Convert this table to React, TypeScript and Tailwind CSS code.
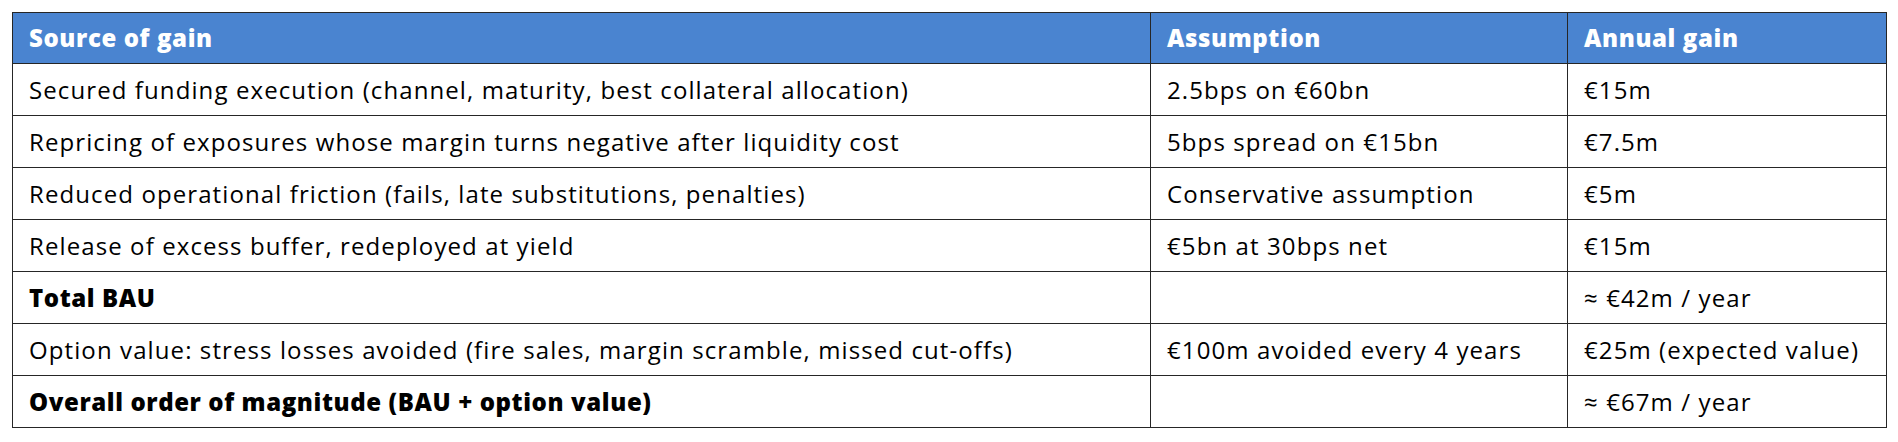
import React from 'react'

type Row = {
  source: string
  assumption: string
  gain: string
  bold?: boolean
}

const rows: Row[] = [
  {
    source: 'Secured funding execution (channel, maturity, best collateral allocation)',
    assumption: '2.5bps on €60bn',
    gain: '€15m',
  },
  {
    source: 'Repricing of exposures whose margin turns negative after liquidity cost',
    assumption: '5bps spread on €15bn',
    gain: '€7.5m',
  },
  {
    source: 'Reduced operational friction (fails, late substitutions, penalties)',
    assumption: 'Conservative assumption',
    gain: '€5m',
  },
  {
    source: 'Release of excess buffer, redeployed at yield',
    assumption: '€5bn at 30bps net',
    gain: '€15m',
  },
  { source: 'Total BAU', assumption: '', gain: '≈ €42m / year', bold: true },
  {
    source: 'Option value: stress losses avoided (fire sales, margin scramble, missed cut-offs)',
    assumption: '€100m avoided every 4 years',
    gain: '€25m (expected value)',
  },
  {
    source: 'Overall order of magnitude (BAU + option value)',
    assumption: '',
    gain: '≈ €67m / year',
    bold: true,
  },
]

const cell = 'h-[52px] border border-[#262626] px-4 align-middle'

export default function App() {
  return (
    <div className="bg-white px-3 pt-3 font-['Open_Sans','Liberation_Sans',sans-serif] text-[24px] tracking-[1.1px] text-black">
      <table className="w-[1874px] table-fixed border-collapse">
        <colgroup>
          <col className="w-[1138px]" />
          <col className="w-[417px]" />
          <col className="w-[319px]" />
        </colgroup>
        <thead>
          <tr className="bg-[#4a84d0] text-left text-white">
            <th className="h-[51px] border border-[#262626] px-4 font-extrabold tracking-[0.6px]">Source of gain</th>
            <th className="h-[51px] border border-[#262626] px-4 font-extrabold tracking-[0.6px]">Assumption</th>
            <th className="h-[51px] border border-[#262626] px-4 font-extrabold tracking-[0.6px]">Annual gain</th>
          </tr>
        </thead>
        <tbody>
          {rows.map((row) => (
            <tr key={row.source}>
              <td className={`${cell} ${row.bold ? 'font-extrabold tracking-[0.6px]' : ''}`}>{row.source}</td>
              <td className={cell}>{row.assumption}</td>
              <td className={cell}>{row.gain}</td>
            </tr>
          ))}
        </tbody>
      </table>
    </div>
  )
}
